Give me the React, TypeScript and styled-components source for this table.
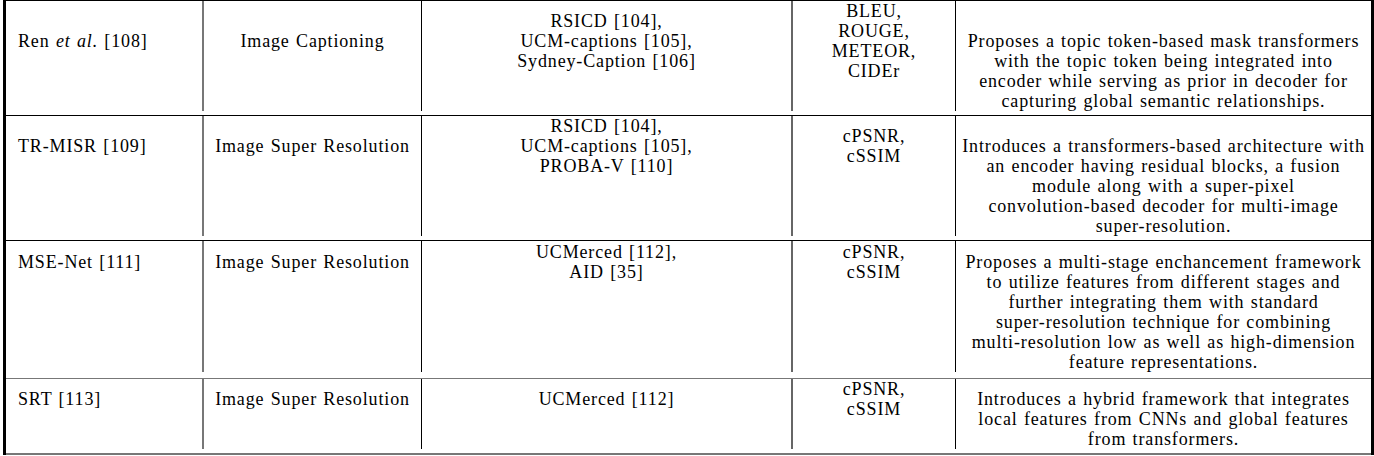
import React from "react";
import styled, { createGlobalStyle } from "styled-components";

const Global = createGlobalStyle`
  html, body { margin: 0; padding: 0; background: #fff; }
  body { font-family: "Liberation Serif", "Times New Roman", serif; color: #000; }
`;

const LINE = 20;

const Table = styled.div`
  margin-left: 3px;
  width: 1371px;
  border-left: 3px solid #000;
  border-right: 3px solid #000;
  border-top: 1px solid #000;
  box-sizing: border-box;
`;

const Row = styled.div<{ $line: string; $lineW: number; $bottom: number }>`
  display: grid;
  grid-template-columns: 198px 218px 371px 163px 1fr;
  border-bottom: ${(p) => p.$lineW}px solid ${(p) => p.$line};
  padding-bottom: ${(p) => p.$bottom}px;
`;

const Cell = styled.div<{ $top: number; $align: "left" | "center"; $rule: string; $ruleW: number; $padX: number }>`
  box-sizing: border-box;
  padding-top: ${(p) => p.$top}px;
  padding-left: ${(p) => p.$padX}px;
  padding-right: ${(p) => p.$padX}px;
  text-align: ${(p) => p.$align};
  border-right: ${(p) => (p.$ruleW ? `${p.$ruleW}px solid ${p.$rule}` : "none")};
  font-size: 18px;
  line-height: ${LINE}px;
  letter-spacing: 0.85px;
  word-spacing: 1px;
`;

const Line = styled.div`
  white-space: nowrap;
`;

type RowData = {
  method: React.ReactNode;
  task: string;
  datasets: string[];
  metrics: string[];
  desc: string[];
  line: string;
  lineW: number;
  extraTop: number;
  bottom: number;
};

const rows: RowData[] = [
  {
    method: (
      <>
        Ren <i>et al.</i> [108]
      </>
    ),
    task: "Image Captioning",
    datasets: ["RSICD [104],", "UCM-captions [105],", "Sydney-Caption [106]"],
    metrics: ["BLEU,", "ROUGE,", "METEOR,", "CIDEr"],
    desc: [
      "Proposes a topic token-based mask transformers",
      "with the topic token being integrated into",
      "encoder while serving as prior in decoder for",
      "capturing global semantic relationships.",
    ],
    line: "#000",
    lineW: 1,
    extraTop: 0,
    bottom: 4,
  },
  {
    method: "TR-MISR [109]",
    task: "Image Super Resolution",
    datasets: ["RSICD [104],", "UCM-captions [105],", "PROBA-V [110]"],
    metrics: ["cPSNR,", "cSSIM"],
    desc: [
      "Introduces a transformers-based architecture with",
      "an encoder having residual blocks, a fusion",
      "module along with a super-pixel",
      "convolution-based decoder for multi-image",
      "super-resolution.",
    ],
    line: "#000",
    lineW: 1,
    extraTop: 0,
    bottom: 4,
  },
  {
    method: "MSE-Net [111]",
    task: "Image Super Resolution",
    datasets: ["UCMerced [112],", "AID [35]"],
    metrics: ["cPSNR,", "cSSIM"],
    desc: [
      "Proposes a multi-stage enchancement framework",
      "to utilize features from different stages and",
      "further integrating them with standard",
      "super-resolution technique for combining",
      "multi-resolution low as well as high-dimension",
      "feature representations.",
    ],
    line: "#777",
    lineW: 1,
    extraTop: 1,
    bottom: 6,
  },
  {
    method: "SRT [113]",
    task: "Image Super Resolution",
    datasets: ["UCMerced [112]"],
    metrics: ["cPSNR,", "cSSIM"],
    desc: [
      "Introduces a hybrid framework that integrates",
      "local features from CNNs and global features",
      "from transformers.",
    ],
    line: "#777",
    lineW: 2,
    extraTop: 0,
    bottom: 4,
  },
];

function TableRow({ r }: { r: RowData }) {
  const counts = [1, 1, r.datasets.length, r.metrics.length];
  const lead = (Math.max(...counts) - 1) * (LINE / 2) + r.extraTop;
  const top = (n: number) => lead - (n - 1) * (LINE / 2);
  return (
    <Row $line={r.line} $lineW={r.lineW} $bottom={r.bottom}>
      <Cell $top={top(1)} $align="left" $rule="#777" $ruleW={2} $padX={12}>
        <Line>{r.method}</Line>
      </Cell>
      <Cell $top={top(1)} $align="center" $rule="#000" $ruleW={1} $padX={2}>
        <Line>{r.task}</Line>
      </Cell>
      <Cell $top={top(r.datasets.length)} $align="center" $rule="#666" $ruleW={2} $padX={2}>
        {r.datasets.map((d) => (
          <Line key={d}>{d}</Line>
        ))}
      </Cell>
      <Cell $top={top(r.metrics.length)} $align="center" $rule="#000" $ruleW={1} $padX={2}>
        {r.metrics.map((d) => (
          <Line key={d}>{d}</Line>
        ))}
      </Cell>
      <Cell $top={lead} $align="center" $rule="#000" $ruleW={0} $padX={2}>
        {r.desc.map((d) => (
          <Line key={d}>{d}</Line>
        ))}
      </Cell>
    </Row>
  );
}

export default function App() {
  return (
    <>
      <Global />
      <Table>
        {rows.map((r, i) => (
          <TableRow key={i} r={r} />
        ))}
      </Table>
    </>
  );
}
